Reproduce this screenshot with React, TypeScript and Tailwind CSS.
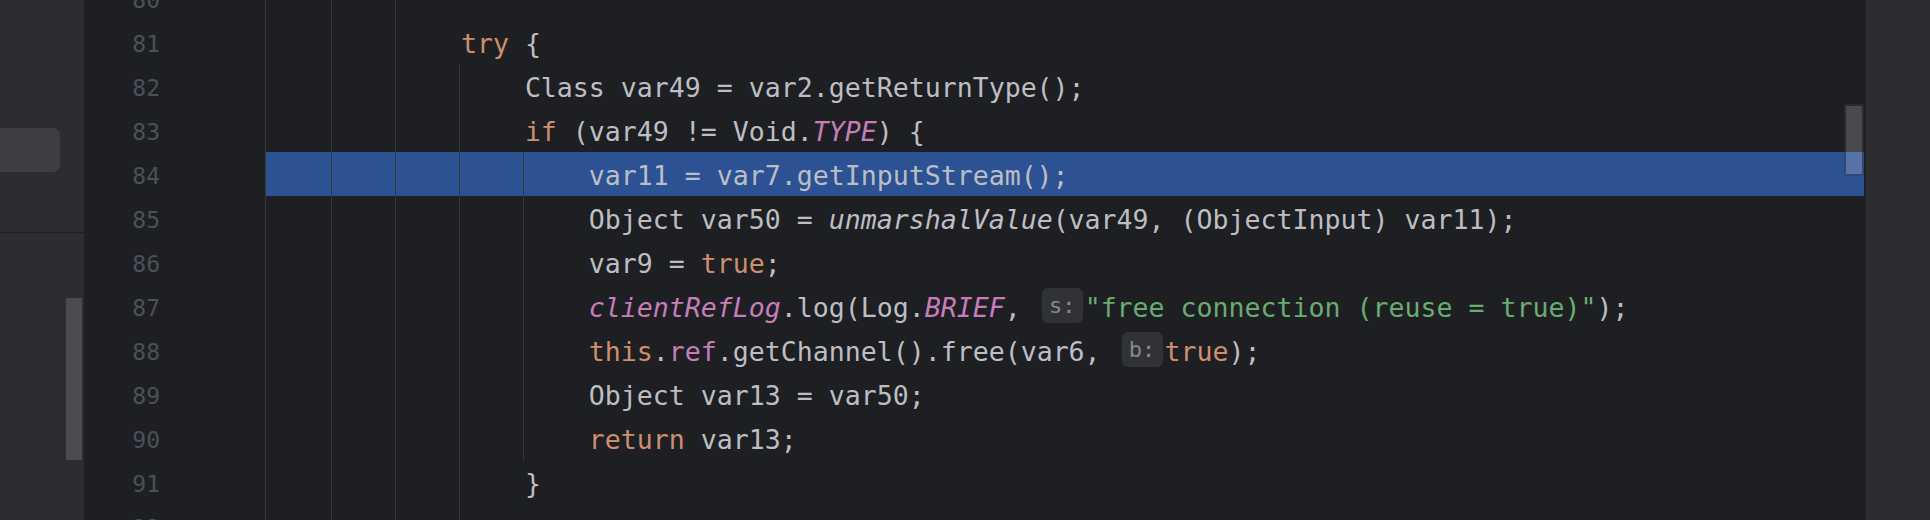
import React from "react";

type Tok = { t: string; c?: string; inlay?: boolean };
type Line = { n: number; indent: number; toks: Tok[]; hl?: boolean };

const K = "text-[#cf8e6d]";
const P = "text-[#c77dbb]";
const PI = "text-[#c77dbb] italic";
const IT = "italic";
const S = "text-[#6aab73]";

const lines: Line[] = [
  { n: 80, indent: 0, toks: [] },
  { n: 81, indent: 12, toks: [{ t: "try", c: K }, { t: " {" }] },
  { n: 82, indent: 16, toks: [{ t: "Class var49 = var2.getReturnType();" }] },
  {
    n: 83,
    indent: 16,
    toks: [{ t: "if", c: K }, { t: " (var49 != Void." }, { t: "TYPE", c: PI }, { t: ") {" }],
  },
  { n: 84, indent: 20, hl: true, toks: [{ t: "var11 = var7.getInputStream();" }] },
  {
    n: 85,
    indent: 20,
    toks: [
      { t: "Object var50 = " },
      { t: "unmarshalValue", c: IT },
      { t: "(var49, (ObjectInput) var11);" },
    ],
  },
  { n: 86, indent: 20, toks: [{ t: "var9 = " }, { t: "true", c: K }, { t: ";" }] },
  {
    n: 87,
    indent: 20,
    toks: [
      { t: "clientRefLog", c: PI },
      { t: ".log(Log." },
      { t: "BRIEF", c: PI },
      { t: ", " },
      { t: "s:", inlay: true },
      { t: '"free connection (reuse = true)"', c: S },
      { t: ");" },
    ],
  },
  {
    n: 88,
    indent: 20,
    toks: [
      { t: "this", c: K },
      { t: "." },
      { t: "ref", c: P },
      { t: ".getChannel().free(var6, " },
      { t: "b:", inlay: true },
      { t: "true", c: K },
      { t: ");" },
    ],
  },
  { n: 89, indent: 20, toks: [{ t: "Object var13 = var50;" }] },
  { n: 90, indent: 20, toks: [{ t: "return", c: K }, { t: " var13;" }] },
  { n: 91, indent: 16, toks: [{ t: "}" }] },
  { n: 92, indent: 0, toks: [] },
];

function CodeRow({ line }: { line: Line }) {
  const groups: React.ReactNode[] = [];
  let run: React.ReactNode[] = [" ".repeat(line.indent)];
  let key = 0;
  const flush = () => {
    groups.push(
      <span key={`r${key++}`} className="pt-[4px] leading-[40px]">
        {run}
      </span>
    );
    run = [];
  };
  line.toks.forEach((tk, i) => {
    if (tk.inlay) {
      flush();
      groups.push(
        <span
          key={`i${key++}`}
          className="mt-[4px] ml-[5px] mr-[2px] flex h-[35px] w-[41px] items-center justify-center rounded-[6px] bg-[#303236] text-[22px] leading-none text-[#868990]"
        >
          {tk.t}
        </span>
      );
    } else {
      run.push(
        <span key={i} className={tk.c ?? ""}>
          {tk.t}
        </span>
      );
    }
  });
  flush();
  return (
    <div
      className={
        line.hl
          ? "ml-[1px] mr-[2px] flex h-[44px] items-start whitespace-pre bg-[#2c5294] pl-[3px]"
          : "flex h-[44px] items-start whitespace-pre pl-[4px]"
      }
    >
      {groups}
    </div>
  );
}

export default function App() {
  return (
    <div className="flex h-[520px] w-[1930px] overflow-hidden bg-[#1e1f22] font-['DejaVu_Sans_Mono',monospace] text-[26.57px] text-[#bcbec4]">
      {/* Left tool panel */}
      <div className="flex w-[84px] shrink-0 flex-col bg-[#2b2d30]">
        <div className="h-[232px] pt-[128px]">
          <div className="h-[44px] w-[60px] rounded-r-[7px] bg-[#3c3e42]" />
        </div>
        <div className="h-[1px] bg-[#1e1f22]" />
        <div className="flex flex-1 justify-end pr-[2px] pt-[65px]">
          <div className="h-[162px] w-[16px] bg-[#4b4c50]" />
        </div>
      </div>

      {/* Editor */}
      <div className="flex min-w-0 flex-1 bg-[#1e1f22]">
        {/* Gutter */}
        <div className="w-[181px] shrink-0 overflow-hidden">
          <div className="-mt-[24px] flex flex-col">
            {lines.map((l) => (
              <div
                key={l.n}
                className="h-[44px] w-[76px] pt-[4px] text-right text-[23px] leading-[40px] text-[#4b5059]"
              >
                {l.n}
              </div>
            ))}
          </div>
        </div>

        {/* Code */}
        <div className="relative min-w-0 flex-1 overflow-hidden">
          <div className="-mt-[24px] flex flex-col">
            {lines.map((l) => (
              <CodeRow key={l.n} line={l} />
            ))}
          </div>

          {/* indent guides */}
          <div className="absolute left-0 top-0 h-full w-[1px] bg-[#35373c]" />
          <div className="absolute left-[66px] top-0 h-full w-[1px] bg-[#35373c]" />
          <div className="absolute left-[130px] top-0 h-full w-[1px] bg-[#35373c]" />
          <div className="absolute left-[194px] top-[64px] bottom-0 w-[1px] bg-[#35373c]" />
          <div className="absolute left-[258px] top-[152px] h-[308px] w-[1px] bg-[#35373c]" />

          {/* scrollbar */}
          <div className="absolute right-[2px] top-[104px] h-[72px] w-[20px] border-2 border-[#3c3e42]/40">
            <div className="h-full w-full bg-white/20" />
          </div>
        </div>
      </div>

      {/* Right panel */}
      <div className="w-[64px] shrink-0 bg-[#2b2d30]" />
    </div>
  );
}
